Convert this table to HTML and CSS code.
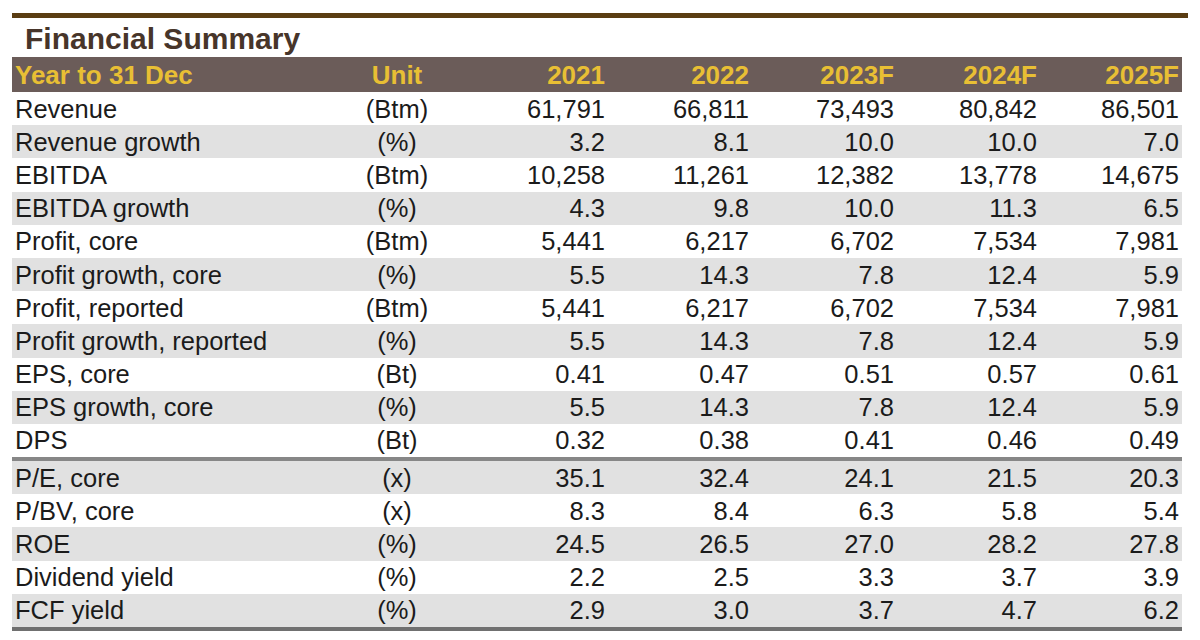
FILE: index.html
```html
<!DOCTYPE html>
<html lang="en">
<head>
<meta charset="utf-8">
<title>Financial Summary</title>
<link rel="stylesheet" href="styles.css">
</head>
<body>
<div class="page">
  <div class="topline"></div>
  <h1 class="title">Financial Summary</h1>
  <div class="fin">
    <div class="row head">
      <div class="lab">Year to 31 Dec</div><div class="unit">Unit</div>
      <div class="num">2021</div><div class="num">2022</div><div class="num">2023F</div><div class="num">2024F</div><div class="num">2025F</div>
    </div>
    <div class="row">
      <div class="lab">Revenue</div><div class="unit">(Btm)</div>
      <div class="num">61,791</div><div class="num">66,811</div><div class="num">73,493</div><div class="num">80,842</div><div class="num">86,501</div>
    </div>
    <div class="row alt">
      <div class="lab">Revenue growth</div><div class="unit">(%)</div>
      <div class="num">3.2</div><div class="num">8.1</div><div class="num">10.0</div><div class="num">10.0</div><div class="num">7.0</div>
    </div>
    <div class="row">
      <div class="lab">EBITDA</div><div class="unit">(Btm)</div>
      <div class="num">10,258</div><div class="num">11,261</div><div class="num">12,382</div><div class="num">13,778</div><div class="num">14,675</div>
    </div>
    <div class="row alt">
      <div class="lab">EBITDA growth</div><div class="unit">(%)</div>
      <div class="num">4.3</div><div class="num">9.8</div><div class="num">10.0</div><div class="num">11.3</div><div class="num">6.5</div>
    </div>
    <div class="row">
      <div class="lab">Profit, core</div><div class="unit">(Btm)</div>
      <div class="num">5,441</div><div class="num">6,217</div><div class="num">6,702</div><div class="num">7,534</div><div class="num">7,981</div>
    </div>
    <div class="row alt">
      <div class="lab">Profit growth, core</div><div class="unit">(%)</div>
      <div class="num">5.5</div><div class="num">14.3</div><div class="num">7.8</div><div class="num">12.4</div><div class="num">5.9</div>
    </div>
    <div class="row">
      <div class="lab">Profit, reported</div><div class="unit">(Btm)</div>
      <div class="num">5,441</div><div class="num">6,217</div><div class="num">6,702</div><div class="num">7,534</div><div class="num">7,981</div>
    </div>
    <div class="row alt">
      <div class="lab">Profit growth, reported</div><div class="unit">(%)</div>
      <div class="num">5.5</div><div class="num">14.3</div><div class="num">7.8</div><div class="num">12.4</div><div class="num">5.9</div>
    </div>
    <div class="row">
      <div class="lab">EPS, core</div><div class="unit">(Bt)</div>
      <div class="num">0.41</div><div class="num">0.47</div><div class="num">0.51</div><div class="num">0.57</div><div class="num">0.61</div>
    </div>
    <div class="row alt">
      <div class="lab">EPS growth, core</div><div class="unit">(%)</div>
      <div class="num">5.5</div><div class="num">14.3</div><div class="num">7.8</div><div class="num">12.4</div><div class="num">5.9</div>
    </div>
    <div class="row">
      <div class="lab">DPS</div><div class="unit">(Bt)</div>
      <div class="num">0.32</div><div class="num">0.38</div><div class="num">0.41</div><div class="num">0.46</div><div class="num">0.49</div>
    </div>
    <div class="sep"></div>
    <div class="row alt">
      <div class="lab">P/E, core</div><div class="unit">(x)</div>
      <div class="num">35.1</div><div class="num">32.4</div><div class="num">24.1</div><div class="num">21.5</div><div class="num">20.3</div>
    </div>
    <div class="row">
      <div class="lab">P/BV, core</div><div class="unit">(x)</div>
      <div class="num">8.3</div><div class="num">8.4</div><div class="num">6.3</div><div class="num">5.8</div><div class="num">5.4</div>
    </div>
    <div class="row alt">
      <div class="lab">ROE</div><div class="unit">(%)</div>
      <div class="num">24.5</div><div class="num">26.5</div><div class="num">27.0</div><div class="num">28.2</div><div class="num">27.8</div>
    </div>
    <div class="row">
      <div class="lab">Dividend yield</div><div class="unit">(%)</div>
      <div class="num">2.2</div><div class="num">2.5</div><div class="num">3.3</div><div class="num">3.7</div><div class="num">3.9</div>
    </div>
    <div class="row alt">
      <div class="lab">FCF yield</div><div class="unit">(%)</div>
      <div class="num">2.9</div><div class="num">3.0</div><div class="num">3.7</div><div class="num">4.7</div><div class="num">6.2</div>
    </div>
    <div class="endline"></div>
  </div>
</div>
</body>
</html>
```

FILE: styles.css
```css
html, body {
  margin: 0;
  padding: 0;
  background: #ffffff;
}

.page {
  padding: 13px 0 0 12px;
  font-family: "Liberation Sans", Arial, sans-serif;
  color: #1b1b1b;
}

.topline {
  width: 1176px;
  height: 5px;
  background: #5a3d12;
}

.title {
  margin: 0;
  padding: 3px 0 0 13px;
  height: 36px;
  font-size: 30px;
  line-height: 36px;
  font-weight: bold;
  color: #47352a;
}

.fin {
  width: 1170px;
}

.row {
  display: grid;
  grid-template-columns: 318px 134px 144px 144px 145px 143px 142px;
  height: 33.2px;
  align-items: center;
  font-size: 25.5px;
  line-height: 30px;
}

.row.alt {
  background: #e1e1e1;
}

.row.head {
  height: 35px;
  background: #6b5c59;
  color: #e8bf34;
  font-weight: bold;
  font-size: 26px;
}

.lab {
  padding-left: 3px;
  white-space: nowrap;
}

.unit {
  text-align: center;
}

.num {
  text-align: right;
  padding-right: 3px;
}

.sep {
  height: 4px;
  background: #878787;
}

.endline {
  height: 4px;
  background: #707070;
}
```
